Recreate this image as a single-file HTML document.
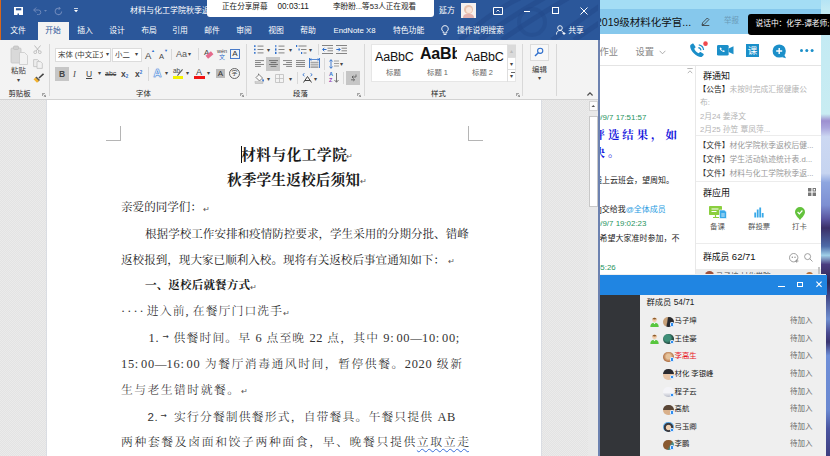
<!DOCTYPE html>
<html lang="zh-CN">
<head>
<meta charset="utf-8">
<title>材料与化工学院秋季返校须知</title>
<style>
*{box-sizing:border-box;margin:0;padding:0}
html,body{width:830px;height:456px;overflow:hidden;background:#fff}
body{position:relative;font-family:"Liberation Sans","Noto Sans CJK SC",sans-serif;font-size:10px;color:#333;-webkit-font-smoothing:antialiased}
.a{position:absolute;white-space:nowrap}
/* ---------- Word window ---------- */
#word{left:0;top:0;width:599px;height:456px;background:#e4e4e4;overflow:hidden}
#tbar{left:0;top:0;width:599px;height:40px;background:#2b579a}
#edge{left:0;top:0;width:1px;height:40px;background:#d9661c}
.tab{top:22px;height:17px;line-height:17px;color:#fff;font-size:7.8px;text-align:center}
#tabsel{left:38px;top:22px;width:30.700px;height:19px;background:#f3f3f3;color:#2b579a}
#ribbon{left:0;top:40px;width:599px;height:60px;background:#f3f3f3;border-bottom:1px solid #d2d2d2}
.glabel{top:88.500px;font-size:7.400px;color:#262626;height:10px;line-height:10px;text-align:center}
.sep{top:44px;width:1px;height:52px;background:#d8d8d8}
.combo{top:48px;height:14px;background:#fff;border:1px solid #dcdcdc;font-size:7.400px;line-height:12px;color:#3a3a3a;padding-left:2px;overflow:hidden}
.ic{font-size:10px;color:#444;line-height:12px}
.rl{font-size:7.400px;line-height:10px;color:#3a3a3a;text-align:center}
.dd{font-size:6px;line-height:7px;color:#444;margin-left:-.5px}
.sty{font-family:"Liberation Sans","DejaVu Sans",sans-serif;color:#111;line-height:16px;height:18px;letter-spacing:-.2px}
.stl{top:67.500px;font-size:7.400px;line-height:10px;color:#666}
/* document */
#docbg{left:0;top:100px;width:599px;height:356px;background:repeating-conic-gradient(#e3e3e3 0 25%,#ebebeb 0 50%) 0 0/2px 2px}
#page{left:46px;top:100px;width:496px;height:356px;background:#fff;border-left:1px solid #dadde3;border-right:1px solid #dadde3}
.doc{font-family:"Liberation Serif","Noto Serif CJK SC",serif;color:#1a1a1a}
.ln{left:121px;height:18px;line-height:18px;font-size:11.57px;text-align:justify;text-align-last:justify;text-justify:inter-character}
.ttl{font-weight:700;font-size:14.7px;height:20px;line-height:20px;text-align-last:justify;text-justify:inter-character}
.pm{color:#555;font-size:7.500px}
.k{font-size:11.8px;font-weight:300;color:#222}
.m{font-family:"Liberation Serif",serif;font-size:12.4px;letter-spacing:.7px;color:#333}
.m i{display:inline-block;width:6.2px;text-align:center;font-style:normal}
.ar{font-size:7.500px;color:#333;line-height:10px;font-family:"DejaVu Sans",sans-serif}
.k u{text-decoration:underline wavy #3a6fd8;text-decoration-thickness:1px;text-underline-offset:2px}
/* share bar */
#share{left:207px;top:0;width:227px;height:17px;background:#fff;border-radius:0 0 3px 3px;font-size:7.6px;color:#222;line-height:14px}
/* ---------- QQ window ---------- */
#desk{left:599px;top:0;width:231px;height:456px;background:#a4ddf5}
#qqhead{left:599px;top:8.500px;width:222px;height:25.500px;background:#86c8ec}
#qqbody{left:599px;top:34px;width:222px;height:241px;background:#fff}
#tip{left:748px;top:14px;width:90px;height:21px;background:#000;border-radius:3px;color:#fff;font-size:7.700px;line-height:20px;padding-left:7.500px}
.ts{font-size:7.900px;line-height:12px;height:12px;color:#1f9460;overflow:hidden;width:90px !important}
.bk{font-family:"Liberation Serif","Noto Serif CJK SC",serif;font-weight:700;font-size:11.400px;letter-spacing:3px;line-height:18px;height:18px;color:#1616dd;overflow:hidden}
.ct{font-size:8px;line-height:12px;height:12px;color:#222;overflow:hidden}
.nt{font-size:7.750px;line-height:11px;color:#b4b4b4}
.al{top:221.500px;font-size:7.400px;line-height:10px;color:#555;text-align:center}
/* ---------- member window ---------- */
#mwin{left:599px;top:274px;width:226.500px;height:182px;background:#efefef}
#mbar{left:599px;top:274.700px;width:228px;height:20.300px;background:#2085e2}
#mdark{left:599px;top:295px;width:41px;height:161px;background:#333539}
.mn{font-size:7.400px;color:#111;height:12px;line-height:12px}
.mw{font-size:7.500px;color:#6a6a6a;height:12px;line-height:12px;left:790px}
.av{width:10.200px;height:10.200px;border-radius:50%;background:#555}
</style>
</head>
<body>
<!-- WORD -->
<div class="a" id="word"></div>
<div class="a" id="tbar"></div>
<div class="a" id="edge"></div>
<svg class="a" style="left:440px;top:0" width="159" height="40" viewBox="0 0 159 40"><g fill="none" stroke="#23498a" stroke-width="5" opacity=".55"><path d="M20 40C40 22 58 8 80 -2"/><path d="M40 40C60 24 82 10 104 -2"/><path d="M62 40C84 24 104 12 128 -2"/><path d="M112 40L160 6"/><path d="M134 40l30-20"/></g><circle cx="92" cy="22" r="13" fill="none" stroke="#23498a" stroke-width="4" opacity=".4"/></svg>

<!-- quick access icons -->
<svg class="a" style="left:13.700px;top:7px" width="9.200" height="8.400" viewBox="0 0 9.200 8.400"><rect x="0" y="0" width="9.200" height="8.400" fill="#fff"/><rect x="1.900" y="1.200" width="5.400" height="2.100" fill="#2b579a"/><rect x="3.500" y="6.500" width="1.500" height="1.900" fill="#2b579a"/></svg>
<svg class="a" style="left:32.500px;top:7px" width="9" height="8" viewBox="0 0 9 8"><path d="M.7 3h4.800a2.300 2.300 0 0 1 0 4.600H4M.7 3l2.500-2.500M.7 3l2.500 2.500" fill="none" stroke="#6e89bb" stroke-width="1"/></svg>
<svg class="a" style="left:44px;top:10px" width="3" height="2" viewBox="0 0 3 2"><path d="M0 0h3L1.500 1.800z" fill="#6e89bb"/></svg>
<svg class="a" style="left:54px;top:7px" width="8.500" height="8.500" viewBox="0 0 10 10"><path d="M6.500 1.600A3.800 3.800 0 1 0 9 5.200M5.800 .2l1.400 1.600L5.400 3.200" fill="none" stroke="#6e89bb" stroke-width="1.200"/></svg>
<svg class="a" style="left:73.800px;top:8.400px" width="4.200" height="4.400" viewBox="0 0 4.200 4.400"><path d="M0 0h4.200v.8H0zM0 1.900h4.200L2.100 4.300z" fill="#fff"/></svg>
<div class="a" style="left:130px;top:5px;font-size:8px;line-height:12px;color:#fff;width:78px;overflow:hidden">材料与化工学院秋季返校后须知</div>
<div class="a" style="left:439px;top:5px;font-size:8px;line-height:12px;color:#fff">延方</div>
<div class="a" style="left:461px;top:3px;width:15px;height:15px;background:#f6f1ee;overflow:hidden"><div class="a" style="left:3px;top:1.500px;width:9px;height:9px;border-radius:50%;background:#e9c2ad"></div><div class="a" style="left:4.500px;top:4px;width:6px;height:6px;border-radius:50%;background:#f8e6dc"></div><div class="a" style="left:2px;top:10.500px;width:11px;height:6px;border-radius:4px 4px 0 0;background:#e3b3b0"></div></div>
<svg class="a" style="left:493px;top:7px" width="10" height="8" viewBox="0 0 10 8"><path d="M.5.5h9v7h-9z" fill="none" stroke="#fff"/><path d="M3.5 4.5L5 3l1.5 1.5" fill="none" stroke="#fff" stroke-width=".9"/></svg>
<div class="a" style="left:524px;top:11px;width:6px;height:1px;background:#fff"></div>
<div class="a" style="left:552px;top:7px;width:7px;height:7px;border:1px solid #fff"></div>
<svg class="a" style="left:580px;top:7px" width="8" height="8" viewBox="0 0 8 8"><path d="M.5.5l7 7M7.5.5l-7 7" stroke="#fff" stroke-width="1"/></svg>
<!-- tabs -->
<div class="a" id="tabsel"></div>
<div class="a tab" style="left:2px;width:32px">文件</div>
<div class="a tab" style="left:37px;width:32px;color:#2b579a">开始</div>
<div class="a tab" style="left:69px;width:32px">插入</div>
<div class="a tab" style="left:101px;width:32px">设计</div>
<div class="a tab" style="left:133px;width:32px">布局</div>
<div class="a tab" style="left:164px;width:32px">引用</div>
<div class="a tab" style="left:196px;width:32px">邮件</div>
<div class="a tab" style="left:228px;width:32px">审阅</div>
<div class="a tab" style="left:260px;width:32px">视图</div>
<div class="a tab" style="left:292px;width:32px">帮助</div>
<div class="a tab" style="left:333px;width:43px">EndNote X8</div>
<div class="a tab" style="left:393px;width:30px">特色功能</div>
<svg class="a" style="left:441px;top:25px" width="8" height="11" viewBox="0 0 8 11"><path d="M4 .6a3.2 3.2 0 0 0-1.8 5.9V8h3.6V6.5A3.2 3.2 0 0 0 4 .6zM2.6 9.5h2.8" fill="none" stroke="#fff" stroke-width=".9"/></svg>
<div class="a tab" style="left:457px;width:46px">操作说明搜索</div>
<svg class="a" style="left:556px;top:25px" width="10" height="10" viewBox="0 0 10 10"><circle cx="4" cy="3" r="2.3" fill="none" stroke="#fff" stroke-width=".9"/><path d="M.5 9.5c0-3 1.5-4 3.5-4s3 1 3.300 2.500M6.500 8.500h3M8 7v3" fill="none" stroke="#fff" stroke-width=".9"/></svg>
<div class="a tab" style="left:568px;width:16px">共享</div>
<div class="a" id="ribbon"></div>

<!-- ===== ribbon content ===== -->
<!-- clipboard -->
<svg class="a" style="left:10px;top:45px" width="19" height="21" viewBox="0 0 19 21"><rect x="1" y="3" width="10" height="15" rx="1" fill="#d9d9d9" stroke="#c4c4c4" stroke-width=".8"/><rect x="3.500" y="1" width="5" height="3.500" rx="1" fill="#cfcfcf" stroke="#bdbdbd" stroke-width=".7"/><path d="M9.500 7.500h5l3 3V19.500h-8z" fill="#f2f2f2" stroke="#c9c9c9" stroke-width=".8"/></svg>
<div class="a rl" style="left:11px;top:65.500px;width:15px">粘贴</div>
<div class="a dd" style="left:17px;top:77px">▾</div>
<svg class="a" style="left:33px;top:45px" width="9" height="9" viewBox="0 0 9 9"><path d="M1.500.5l4.500 5.500M7.500.5L3 6" stroke="#b5b5b5" stroke-width=".9" fill="none"/><circle cx="2.200" cy="7.200" r="1.400" fill="none" stroke="#b5b5b5" stroke-width=".8"/><circle cx="6.800" cy="7.200" r="1.400" fill="none" stroke="#b5b5b5" stroke-width=".8"/></svg>
<svg class="a" style="left:33px;top:59px" width="10" height="10" viewBox="0 0 10 10"><path d="M.6.600h4l1.500 1.500v5.500H.6z" fill="#ededed" stroke="#c0c0c0" stroke-width=".8"/><path d="M4 2.600h3.500l1.800 1.800v5H4z" fill="#f2f2f2" stroke="#c0c0c0" stroke-width=".8"/></svg>
<svg class="a" style="left:33px;top:73px" width="11" height="10" viewBox="0 0 11 10"><path d="M10.500.8L6 5" stroke="#444" stroke-width="1.600"/><path d="M3.500 3.500l3.500 3.500-1.500 1.500L2 5z" fill="#555"/><path d="M2.500 4.500l3.500 3.500L4 9.800.5 6.300z" fill="#f2b230"/></svg>
<div class="a glabel" style="left:8px;width:23px">剪贴板</div>
<svg class="a" style="left:42px;top:93px" width="4" height="4" viewBox="0 0 4 4"><path d="M.4 3V.4H3M1.500 1.500L3.700 3.700M3.700 1.800v1.900H1.800" fill="none" stroke="#777" stroke-width=".7"/></svg>
<div class="a sep" style="left:49px"></div>
<!-- font group -->
<div class="a combo" style="left:55px;width:56px">宋体 (中文正文</div>
<div class="a" style="left:103px;top:49px;width:7px;height:12px;background:#fff"></div>
<div class="a dd" style="left:106px;top:51px">▾</div>
<div class="a combo" style="left:112px;width:30px">小二</div>
<div class="a dd" style="left:135.500px;top:51px">▾</div>
<div class="a ic" style="left:145px;top:50px;font-size:9.500px">A</div><div class="a" style="left:151px;top:48px;font-size:4px;color:#2f6fcc;line-height:5px">▲</div>
<div class="a ic" style="left:159px;top:51px;font-size:7.500px">A</div><div class="a" style="left:164px;top:48px;font-size:4px;color:#2f6fcc;line-height:5px">▼</div>
<div class="a" style="left:171px;top:49px;width:1px;height:11px;background:#d8d8d8"></div>
<div class="a ic" style="left:176px;top:48px;font-size:9px;color:#5a5a5a">Aa</div>
<div class="a dd" style="left:188.500px;top:51px">▾</div>
<div class="a" style="left:198px;top:48px;width:1px;height:12px;background:#d8d8d8"></div>
<div class="a ic" style="left:204px;top:47px;font-size:8px">A</div>
<div class="a" style="left:206px;top:53px;width:7px;height:4px;background:#e56b8c;transform:rotate(-40deg)"></div>
<div class="a" style="left:217px;top:47px;font-size:5.500px;line-height:8px;color:#444">wén</div>
<div class="a" style="left:219px;top:54px;font-size:6px;line-height:7px;color:#2f6fcc">文</div>
<div class="a" style="left:230px;top:49px;width:10px;height:10px;border:1px solid #4a7bc8;font-size:8px;line-height:8px;text-align:center;color:#333">A</div>
<!-- row 2 -->
<div class="a" style="left:55px;top:67px;width:14px;height:14px;background:#c6c6c6"></div>
<div class="a ic" style="left:59px;top:68px;font-weight:700;font-size:8.500px">B</div>
<div class="a ic" style="left:73px;top:68px;font-style:italic;font-size:8.500px;font-family:'Liberation Serif',serif">I</div>
<div class="a ic" style="left:86px;top:68px;font-size:8.500px;text-decoration:underline">U</div>
<div class="a dd" style="left:98px;top:70px">▾</div>
<div class="a ic" style="left:105px;top:68px;font-size:7px;text-decoration:line-through">abc</div>
<div class="a ic" style="left:121px;top:68px;font-size:8.500px;font-weight:700">x<span style="font-size:4.500px;color:#2f6fcc;position:relative;top:1px">2</span></div>
<div class="a ic" style="left:135px;top:68px;font-size:8.500px;font-weight:700">x<span style="font-size:4.500px;color:#2f6fcc;position:relative;top:-3.500px">2</span></div>
<div class="a" style="left:148px;top:67px;width:1px;height:14px;background:#d8d8d8"></div>
<div class="a" style="left:153.500px;top:67px;font-size:11px;line-height:13px;font-weight:700;color:#fff;-webkit-text-stroke:.55px #3f82d6;text-shadow:0 0 1.500px #8fbdf0">A</div>
<div class="a dd" style="left:165px;top:70px">▾</div>
<div class="a ic" style="left:173px;top:65px;font-size:6.500px">ab</div>
<div class="a" style="left:176px;top:72px;width:8px;height:1px;background:#555;transform:rotate(-50deg)"></div>
<div class="a" style="left:173px;top:76px;width:10px;height:3px;background:#f2f200"></div>
<div class="a dd" style="left:186px;top:70px">▾</div>
<div class="a ic" style="left:196px;top:66px;font-size:9px">A</div>
<div class="a" style="left:194px;top:76px;width:11px;height:3px;background:#f01414"></div>
<div class="a dd" style="left:207px;top:70px">▾</div>
<div class="a" style="left:216px;top:69px;width:9px;height:9px;background:#b9b9b9;font-size:8px;line-height:9px;text-align:center;color:#333">A</div>
<div class="a" style="left:229px;top:68px;width:11px;height:11px;border:.8px solid #666;border-radius:50%;font-size:6px;line-height:9.500px;text-align:center;color:#444">字</div>
<div class="a glabel" style="left:136px;width:15px">字体</div>
<svg class="a" style="left:240px;top:93px" width="4" height="4" viewBox="0 0 4 4"><path d="M.4 3V.4H3M1.500 1.500L3.700 3.700M3.700 1.800v1.900H1.800" fill="none" stroke="#777" stroke-width=".7"/></svg>
<div class="a sep" style="left:246px"></div>
<!-- paragraph group -->
<svg class="a" style="left:254px;top:45px" width="10" height="9" viewBox="0 0 10 9"><g fill="#2f6fcc"><rect x="0" y=".3" width="1.600" height="1.600"/><rect x="0" y="3.700" width="1.600" height="1.600"/><rect x="0" y="7.100" width="1.600" height="1.600"/></g><path d="M3.500 1.100h6M3.500 4.500h6M3.500 7.900h6" stroke="#777" stroke-width=".9"/></svg>
<div class="a dd" style="left:267px;top:47px">▾</div>
<svg class="a" style="left:275px;top:45px" width="10" height="9" viewBox="0 0 10 9"><g fill="#2f6fcc"><rect x=".3" y="0" width="1" height="2.200"/><rect x="0" y="3.400" width="1.500" height="2.200"/><rect x="0" y="6.800" width="1.500" height="2.200"/></g><path d="M3.500 1.100h6M3.500 4.500h6M3.500 7.900h6" stroke="#777" stroke-width=".9"/></svg>
<div class="a dd" style="left:289px;top:47px">▾</div>
<svg class="a" style="left:296px;top:45px" width="11" height="9" viewBox="0 0 11 9"><g fill="#2f6fcc"><rect x="0" y="0" width="1.200" height="2"/><rect x="2.500" y="3.500" width="1.200" height="2"/><rect x="5" y="7" width="1.200" height="2"/></g><path d="M2.500 1h8M5 4.500h5.500M7.500 8h3" stroke="#777" stroke-width=".9"/></svg>
<div class="a dd" style="left:309px;top:47px">▾</div>
<div class="a" style="left:318px;top:44px;width:1px;height:11px;background:#d8d8d8"></div>
<svg class="a" style="left:322px;top:45px" width="11" height="9" viewBox="0 0 11 9"><path d="M0 .5h11M5.500 3.200h5.500M5.500 5.800h5.500M0 8.500h11" stroke="#777" stroke-width=".9"/><path d="M4.500 4.500H.8M2.300 2.800L.6 4.500l1.700 1.700" stroke="#2f6fcc" stroke-width="1" fill="none"/></svg>
<svg class="a" style="left:336px;top:45px" width="11" height="9" viewBox="0 0 11 9"><path d="M0 .5h11M5.500 3.200h5.500M5.500 5.800h5.500M0 8.500h11" stroke="#777" stroke-width=".9"/><path d="M.300 4.500H4M2.500 2.800l1.700 1.700-1.700 1.700" stroke="#2f6fcc" stroke-width="1" fill="none"/></svg>
<svg class="a" style="left:254.5px;top:60px" width="9" height="7" viewBox="0 0 9 7"><path d="M0.00 0.60h9.00" stroke="#777" stroke-width="0.9"/><path d="M0.00 2.53h5.85" stroke="#777" stroke-width="0.9"/><path d="M0.00 4.47h9.00" stroke="#777" stroke-width="0.9"/><path d="M0.00 6.40h5.85" stroke="#777" stroke-width="0.9"/></svg>
<div class="a" style="left:266px;top:57px;width:14px;height:14px;background:#c6c6c6"></div>
<svg class="a" style="left:268.5px;top:60px" width="9" height="7" viewBox="0 0 9 7"><path d="M0.00 0.60h9.00" stroke="#666" stroke-width="0.9"/><path d="M1.57 2.53h5.85" stroke="#666" stroke-width="0.9"/><path d="M0.00 4.47h9.00" stroke="#666" stroke-width="0.9"/><path d="M1.57 6.40h5.85" stroke="#666" stroke-width="0.9"/></svg>
<svg class="a" style="left:282.5px;top:60px" width="9" height="7" viewBox="0 0 9 7"><path d="M0.00 0.60h9.00" stroke="#777" stroke-width="0.9"/><path d="M3.15 2.53h5.85" stroke="#777" stroke-width="0.9"/><path d="M0.00 4.47h9.00" stroke="#777" stroke-width="0.9"/><path d="M3.15 6.40h5.85" stroke="#777" stroke-width="0.9"/></svg>
<svg class="a" style="left:296px;top:60px" width="9" height="7" viewBox="0 0 9 7"><path d="M0.00 0.60h9.00" stroke="#777" stroke-width="0.9"/><path d="M0.00 2.53h9.00" stroke="#777" stroke-width="0.9"/><path d="M0.00 4.47h9.00" stroke="#777" stroke-width="0.9"/><path d="M0.00 6.40h9.00" stroke="#777" stroke-width="0.9"/></svg>
<svg class="a" style="left:308.500px;top:58px" width="11" height="10" viewBox="0 0 11 10"><path d="M.5 0v10M10.500 0v10" stroke="#2f6fcc" stroke-width=".9"/><path d="M1 1.500h9M2.500.3L1 1.500l1.500 1.200M8.500.3L10 1.500 8.500 2.700" stroke="#2f6fcc" stroke-width=".8" fill="none"/><path d="M1.500 4.300h8M1.500 6.200h8M1.500 8.100h8M1.500 9.700h8" stroke="#888" stroke-width=".9"/></svg>
<div class="a" style="left:324px;top:58px;width:1px;height:12px;background:#d8d8d8"></div>
<svg class="a" style="left:328.500px;top:58.500px" width="10" height="10" viewBox="0 0 10 10"><path d="M2 .8v8.400M.4 2.500L2 .7l1.600 1.800M.4 7.500L2 9.300l1.600-1.800" stroke="#2f6fcc" stroke-width=".9" fill="none"/><path d="M5 2h5M5 4.500h5M5 7h5" stroke="#888" stroke-width=".8"/></svg>
<div class="a dd" style="left:340.500px;top:61px">▾</div>
<svg class="a" style="left:254px;top:73px" width="11" height="11" viewBox="0 0 11 11"><path d="M2 4.500L5 1.500l3.500 3.500-3 3z" fill="#fafafa" stroke="#666" stroke-width=".8"/><path d="M4.500 2V.6" stroke="#666" stroke-width=".8"/><path d="M8.800 5.500c.8 1 1.200 1.700 1.200 2.200a.9.900 0 0 1-1.800 0c0-.5.300-1.200.6-2.200z" fill="#2f6fcc"/><rect x="1" y="8.700" width="8" height="2" fill="#d0d0d0" stroke="#aaa" stroke-width=".4"/></svg>
<div class="a dd" style="left:267px;top:75.500px">▾</div>
<svg class="a" style="left:275px;top:74px" width="9" height="9" viewBox="0 0 9 9"><path d="M.5.500h8v8h-8zM4.500.5v8M.5 4.500h8" fill="none" stroke="#bdbdbd" stroke-width=".8"/></svg>
<div class="a dd" style="left:289px;top:75.500px">▾</div>
<div class="a" style="left:297px;top:72px;width:1px;height:12px;background:#d8d8d8"></div>
<svg class="a" style="left:302px;top:73px" width="11" height="10" viewBox="0 0 11 10"><path d="M1.500 9.500L5.500 3.500l4 6M2.800 7.500h5.400" fill="none" stroke="#444" stroke-width="1"/><path d="M2.500.3L.8 1.700l1.700 1.400M8.500.3l1.700 1.400-1.700 1.400" fill="none" stroke="#2f6fcc" stroke-width=".9"/></svg>
<div class="a dd" style="left:314.500px;top:75.500px">▾</div>
<div class="a" style="left:324px;top:72px;width:1px;height:12px;background:#d8d8d8"></div>
<div class="a" style="left:329px;top:72px;font-size:5.500px;line-height:5.500px;color:#2f6fcc;font-weight:700">A</div><div class="a" style="left:329px;top:77.500px;font-size:5.500px;line-height:5.500px;color:#9a3fb5;font-weight:700">Z</div>
<svg class="a" style="left:334px;top:73px" width="5" height="10" viewBox="0 0 5 10"><path d="M2.500 0v9M.5 7l2 2.300 2-2.300" fill="none" stroke="#666" stroke-width=".9"/></svg>
<div class="a" style="left:343px;top:72px;width:1px;height:12px;background:#d8d8d8"></div>
<div class="a" style="left:346px;top:71px;width:14px;height:14px;background:#c6c6c6"></div>
<svg class="a" style="left:349.500px;top:74px" width="7" height="8" viewBox="0 0 7 8"><path d="M6 .500v2.500H2M3.300 1.700L2 3l1.300 1.300" fill="none" stroke="#555" stroke-width=".8"/><path d="M1 5.800h3.500M3.300 4.600L4.600 5.800 3.300 7" fill="none" stroke="#555" stroke-width=".8"/></svg>
<div class="a glabel" style="left:293px;width:15px">段落</div>
<svg class="a" style="left:357px;top:93px" width="4" height="4" viewBox="0 0 4 4"><path d="M.4 3V.4H3M1.500 1.500L3.700 3.700M3.700 1.800v1.900H1.800" fill="none" stroke="#777" stroke-width=".7"/></svg>
<div class="a sep" style="left:364px"></div>
<!-- styles -->
<div class="a" style="left:371px;top:44px;width:145px;height:38px;background:#fff;border:1px solid #e6e6e6"></div>
<div class="a sty" style="left:375px;top:49px;font-size:12.500px">AaBbC</div>
<div class="a sty" style="left:420px;top:46px;font-size:16px;font-weight:700;width:37px;overflow:hidden">AaBbC</div>
<div class="a sty" style="left:465px;top:49px;font-size:12.500px">AaBbC</div>
<div class="a stl" style="left:386px">标题</div>
<div class="a stl" style="left:427px">标题 1</div>
<div class="a stl" style="left:472px">标题 2</div>
<div class="a" style="left:507px;top:45px;width:9px;height:12px;background:#dadada"></div>
<div class="a" style="left:507px;top:44px;width:1px;height:38px;background:#dedede"></div>
<div class="a" style="left:507px;top:57px;width:9px;height:1px;background:#dedede"></div>
<div class="a" style="left:507px;top:69px;width:9px;height:1px;background:#dedede"></div>
<div class="a dd" style="left:510px;top:48px;color:#bbb">▴</div>
<div class="a dd" style="left:510px;top:60.500px">▾</div>
<div class="a" style="left:510.500px;top:72px;width:4px;height:1px;background:#666"></div>
<div class="a dd" style="left:510px;top:73px">▾</div>
<div class="a glabel" style="left:431px;width:15px">样式</div>
<svg class="a" style="left:516px;top:93px" width="4" height="4" viewBox="0 0 4 4"><path d="M.4 3V.4H3M1.500 1.500L3.700 3.700M3.700 1.800v1.900H1.800" fill="none" stroke="#777" stroke-width=".7"/></svg>
<div class="a sep" style="left:522px"></div>
<!-- editing -->
<div class="a" style="left:529.500px;top:43.500px;width:19px;height:17px;background:#f8f8f8;border:1px solid #dcdcdc"></div>
<svg class="a" style="left:534px;top:47px" width="10" height="10" viewBox="0 0 10 10"><circle cx="6.200" cy="3.800" r="2.600" fill="none" stroke="#2f6fcc" stroke-width="1.100"/><path d="M4.300 5.700L1 9" stroke="#2f6fcc" stroke-width="1.400"/></svg>
<div class="a rl" style="left:532px;top:64.500px;width:15px">编辑</div>
<div class="a dd" style="left:538.500px;top:75px">▾</div>
<div class="a sep" style="left:556px"></div>
<svg class="a" style="left:586.500px;top:92.200px" width="6" height="4" viewBox="0 0 6 4"><path d="M.4 3.500L3 .8l2.600 2.700" fill="none" stroke="#505050" stroke-width="1.200"/></svg>

<div class="a" id="docbg"></div>
<div class="a" id="page"></div>
<div class="a" style="left:587.500px;top:100px;width:10px;height:356px;background:#e9e9e9"></div>
<div class="a" style="left:588.500px;top:101px;width:9px;height:9.500px;background:#fdfdfd;border:1px solid #d4d4d4"></div>
<svg class="a" style="left:591px;top:104.500px" width="4.600" height="2.600" viewBox="0 0 4.600 2.600"><path d="M0 2.600L2.300 0l2.300 2.600z" fill="#555"/></svg>
<div class="a" style="left:589px;top:116px;width:8.500px;height:91px;background:#fff;border:1px solid #c8c8c8"></div>
<div class="a" style="left:598px;top:0;width:1.800px;height:456px;background:#6d82b0;z-index:5"></div>
<div class="a" style="left:597.500px;top:0;width:2.300px;height:40px;background:#2b579a;z-index:6"></div>


<!-- document text -->
<div class="a" style="left:106px;top:140px;width:15px;height:1px;background:#b5b5b5"></div>
<div class="a" style="left:120px;top:126px;width:1px;height:15px;background:#b5b5b5"></div>
<div class="a" style="left:468px;top:140px;width:15px;height:1px;background:#b5b5b5"></div>
<div class="a" style="left:468px;top:126px;width:1px;height:15px;background:#b5b5b5"></div>
<div class="a" style="left:241px;top:146px;width:1px;height:17px;background:#111"></div>
<div class="a doc ttl" style="left:241px;top:145px;width:106px">材料与化工学院</div>
<div class="a doc pm" style="left:346px;top:152px">↵</div>
<div class="a doc ttl" style="left:227px;top:170px;width:133px">秋季学生返校后须知</div>
<div class="a doc pm" style="left:360px;top:177px">↵</div>
<div class="a doc ln" style="top:199px;width:80px">亲爱的同学们：</div>
<div class="a doc pm" style="left:203px;top:205px">↵</div>
<div class="a doc ln" style="left:145px;top:225.500px;width:323px">根据学校工作安排和疫情防控要求，学生采用的分期分批、错峰</div>
<div class="a doc ln" style="top:251.500px;width:324px">返校报到，现大家已顺利入校。现将有关返校后事宜通知如下：</div>
<div class="a doc pm" style="left:447.500px;top:257px">↵</div>
<div class="a doc ln" style="left:145px;top:277.400px;width:105px;font-weight:700">一、返校后就餐方式</div>
<div class="a doc pm" style="left:250px;top:283px">↵</div>
<div class="a doc ln k" style="top:302.300px;width:161px"><span class="m"><i>·</i><i>·</i><i>·</i><i>·</i></span>进入前<span class="m"><i>,</i></span>在餐厅门口洗手</div>
<div class="a doc pm" style="left:283px;top:309px">↵</div>
<div class="a doc ln k" style="left:148.500px;top:328.500px;width:9px"><span class="m">1<i>.</i></span></div>
<div class="a doc ar" style="left:162.500px;top:331.500px">→</div>
<div class="a doc ln k" style="left:173.500px;top:328.500px;width:288.500px">供餐时间。早 <span class="m">6</span> 点至晚 <span class="m">22</span> 点，其中 <span class="m">9<i>:</i>00</span>—<span class="m">10<i>:</i>00<i>;</i></span></div>
<div class="a doc ln k" style="top:354.700px;width:341px"><span class="m">15<i>:</i>00</span>—<span class="m">16<i>:</i>00</span> 为餐厅消毒通风时间，暂停供餐。<span class="m">2020</span> 级新</div>
<div class="a doc ln k" style="top:381px;width:118px">生与老生错时就餐。</div>
<div class="a doc pm" style="left:241px;top:387px">↵</div>
<div class="a doc ln k" style="left:147.500px;top:407.600px;width:9px;font-family:'Liberation Sans',sans-serif"><span class="m" style="font-family:'Liberation Sans',sans-serif;font-size:11.500px">2<i>.</i></span></div>
<div class="a doc ar" style="left:160.500px;top:410.600px">→</div>
<div class="a doc ln k" style="left:174px;top:407.600px;width:282px">实行分餐制供餐形式，自带餐具。午餐只提供 <span class="m">AB</span></div>
<div class="a doc ln k" style="top:433.400px;width:348px">两种套餐及卤面和饺子两种面食，早、晚餐只提供<u>立取立走</u></div>

<!-- QQ -->
<div class="a" id="desk"></div>
<div class="a" style="left:821px;top:0;width:9px;height:456px;background:linear-gradient(180deg,#b5e4f5 0,#c2eaf4 2%,#c8ecf2 25%,#9d8fd0 26.500%,#a9a4dc 28%,#ccd8f2 30%,#c6d4f0 38%,#8ea6e0 40%,#7d8fd2 45%,#5a55a0 48%,#3b2f68 50%,#4d6aa8 54%,#9fd0e8 56%,#4a3c80 58%,#2e2650 62%,#3a3a78 64%,#6f8fd0 70%,#4a4a90 73%,#3a3570 75%,#6f8fd8 78%,#6a88d0 90%,#4a55a0 94%,#3f3f80 100%)"></div>
<div class="a" id="qqhead"></div>
<div class="a" id="qqbody"></div>
<!-- qq header -->
<div class="a" style="left:599px;top:14px;font-size:10.500px;line-height:16px;color:#111;width:120px;overflow:hidden"><span style="margin-left:-3px">2019级材料化学官...</span></div>
<svg class="a" style="left:701px;top:17px" width="9" height="9" viewBox="0 0 9 9"><path d="M1 8l.6-2.200L6.300 1l1.600 1.600L3.200 7.400zM.8 8.500h7.500" fill="none" stroke="#333" stroke-width=".8"/></svg>
<div class="a" style="left:724px;top:16px;font-size:7.500px;line-height:10px;color:#6a9ab8">举报</div>
<!-- toolbar -->
<div class="a" style="left:599.500px;top:46px;font-size:9.300px;line-height:12px;color:#8a8a8a">作业</div>
<div class="a" style="left:635.500px;top:46px;font-size:9.300px;line-height:12px;color:#8a8a8a">设置</div>
<svg class="a" style="left:659px;top:50px" width="7" height="5" viewBox="0 0 7 5"><path d="M.6.800L3.500 3.800 6.400.8" fill="none" stroke="#999" stroke-width=".8"/></svg>
<svg class="a" style="left:688px;top:40.800px" width="20.400" height="20.400" viewBox="0 0 17 17"><path d="M2.200 3.200c-.9 1-.2 4 2.400 6.800s5.800 4 7 3.200l1.300-1.300c.4-.4.300-.9-.1-1.200l-2-1.300c-.4-.3-.9-.200-1.200.100l-.7.800c-1.600-.8-3-2.300-3.700-3.900l.8-.700c.3-.3.400-.8.100-1.200L4.700 2.400c-.3-.4-.8-.4-1.200-.1z" fill="#1b8fc9"/><path d="M8.600 5.500a2.500 2.500 0 0 1 2.200 2.300M9 3.300a4.800 4.800 0 0 1 4 4.200" fill="none" stroke="#1b8fc9" stroke-width="1"/><circle cx="14.600" cy="2.200" r="1.900" fill="#f0484d"/></svg>
<svg class="a" style="left:717px;top:45px" width="16.500" height="10.500" viewBox="0 0 17 12" preserveAspectRatio="none"><rect x="0" y="0" width="12" height="12" rx="1.500" fill="#1b8fc9"/><path d="M12 4l5-2.500v9L12 8z" fill="#1b8fc9"/><path d="M3 3.300c-.4.500-.100 1.800 1.100 3.100s2.600 1.900 3.200 1.500l.6-.6-.1-.6-1-.6-.5.100-.3.400c-.7-.4-1.400-1.100-1.700-1.800l.4-.3.100-.6-.7-.9-.5-.100z" fill="#fff"/></svg>
<div class="a" style="left:746px;top:44px;width:13px;height:13px;background:#1b8fc9;color:#fff;font-size:9.500px;line-height:13px;text-align:center">课</div>
<svg class="a" style="left:772px;top:44px" width="15" height="15" viewBox="0 0 15 15"><circle cx="7.200" cy="7" r="6.600" fill="#1b8fc9"/><path d="M12.400 11l1.600 3.300-4.500-1.300z" fill="#1b8fc9"/><path d="M7.200 4v6M4.200 7h6" stroke="#fff" stroke-width="1.400"/></svg>
<div class="a" style="left:800px;top:48.500px;width:3px;height:3px;border-radius:50%;background:#1b8fc9;box-shadow:5.300px 0 0 #1b8fc9,10.600px 0 0 #1b8fc9"></div>
<div class="a" style="left:599px;top:65px;width:222px;height:1px;background:#e4e4e4"></div>
<div class="a" style="left:695px;top:66px;width:1px;height:208px;background:#e8e8e8"></div>
<svg class="a" style="left:687px;top:67.500px" width="6" height="6" viewBox="0 0 6 6"><path d="M.3.500h5.400M.8 5.200L3 2.800l2.200 2.400" fill="none" stroke="#999" stroke-width=".7"/></svg>
<!-- chat column -->
<div class="a ts" style="left:599px;top:112px"><span style="margin-left:-7.500px">19/9/7 17:51:57</span></div>
<div class="a bk" style="left:599px;top:125.500px;width:90px"><span style="margin-left:-5.500px">评选结果，如</span></div>
<div class="a bk" style="left:599px;top:143.500px;width:90px"><span style="margin-left:-5.500px">决。</span></div>
<div class="a ct" style="left:599px;top:175px;width:90px"><span style="margin-left:-5px">线上云班会，望周知。</span></div>
<div class="a ct" style="left:599px;top:204px;width:90px"><span style="margin-left:.5px">]交给我<span style="color:#2a9de2">@全体成员</span></span></div>
<div class="a ts" style="left:599px;top:218px"><span style="margin-left:-7.500px">19/9/7 19:02:23</span></div>
<div class="a ct" style="left:599px;top:233px;width:90px"><span style="margin-left:.5px">希望大家准时参加，不</span></div>
<div class="a ts" style="left:599px;top:262px"><span style="margin-left:-14px">19:55:26</span></div>
<!-- right column -->
<div class="a" style="left:703px;top:70px;font-size:9px;line-height:12px;color:#111">群通知</div>
<div class="a nt" style="left:698.500px;top:84px"><span style="color:#222">【公告】</span>未按时完成汇报健康公</div>
<div class="a nt" style="left:700px;top:97px">布:</div>
<div class="a nt" style="left:700px;top:110.500px">2月24 姜泽文</div>
<div class="a nt" style="left:700px;top:123.500px">2月25 孙笠 覃凤萍...</div>
<div class="a" style="left:696px;top:135px;width:125px;height:1px;background:#ececec"></div>
<div class="a nt" style="left:698.500px;top:140px;color:#999"><span style="color:#333">【文件】</span>材化学院秋季返校后健...</div>
<div class="a nt" style="left:698.500px;top:154px;color:#999"><span style="color:#333">【文件】</span>学生活动轨迹统计表.d...</div>
<div class="a nt" style="left:698.500px;top:167.500px;color:#999"><span style="color:#333">【文件】</span>材料与化工学院秋季返...</div>
<div class="a" style="left:696px;top:181px;width:125px;height:1px;background:#ececec"></div>
<div class="a" style="left:703px;top:187px;font-size:9px;line-height:12px;color:#111">群应用</div>
<svg class="a" style="left:808px;top:188px" width="8" height="8" viewBox="0 0 8 8"><path d="M0 0h3.400v3.400H0zM4.600 0H8v3.400H4.600zM0 4.600h3.400V8H0zM4.600 4.600H8V8H4.600z" fill="#777"/><path d="M5.600 1h1.400v1.400H5.600z" fill="#fff"/></svg>
<svg class="a" style="left:709px;top:206px" width="18" height="13" viewBox="0 0 18 13"><rect x="0" y="0" width="13" height="9" rx=".8" fill="#8bcf3f"/><path d="M2.500 3h7M2.500 5.500h5" stroke="#fff" stroke-width="1"/><path d="M4 11.500h6M6.500 9v2.500" stroke="#8bcf3f" stroke-width="1.200"/><path d="M10.500 4h5l2 2v6.500h-7z" fill="#39a9e8" stroke="#fff" stroke-width=".6"/><path d="M12.300 8h3.400M12.300 10h3.400" stroke="#fff" stroke-width=".8"/></svg>
<div class="a al" style="left:710px;width:15px">备课</div>
<svg class="a" style="left:754px;top:207px" width="10" height="11" viewBox="0 0 10 11"><path d="M1.200 10.500V5.500M3.700 10.500V2.500M6.200 10.500V0.500M8.700 10.500V6" stroke="#39a9e8" stroke-width="1.800"/></svg>
<div class="a al" style="left:748px;width:22px">群投票</div>
<svg class="a" style="left:795px;top:206.500px" width="10" height="13" viewBox="0 0 10 13"><path d="M5 0a5 5 0 0 1 5 5c0 3-3.500 6-5 8C3.500 11 0 8 0 5a5 5 0 0 1 5-5z" fill="#63c23c"/><path d="M2.600 5l1.800 1.800 3-3.300" fill="none" stroke="#fff" stroke-width="1.200"/></svg>
<div class="a al" style="left:792px;width:15px">打卡</div>
<div class="a" style="left:696px;top:243px;width:125px;height:1px;background:#ececec"></div>
<div class="a" style="left:703px;top:251px;font-size:8.800px;line-height:12px;color:#111">群成员 <span style="font-size:9.500px">62/71</span></div>
<svg class="a" style="left:789px;top:252.500px" width="10" height="10" viewBox="0 0 10 10"><circle cx="4.700" cy="4.700" r="4.200" fill="none" stroke="#888" stroke-width=".8"/><circle cx="3.300" cy="4.200" r=".7" fill="#888"/><circle cx="6" cy="4.200" r=".7" fill="#888"/><path d="M6 8h3.500M7.700 6.300v3.400" stroke="#888" stroke-width=".8"/></svg>
<svg class="a" style="left:804px;top:253px" width="9" height="9" viewBox="0 0 9 9"><circle cx="3.600" cy="3.600" r="3" fill="none" stroke="#888" stroke-width=".8"/><path d="M5.800 5.800L8.500 8.500" stroke="#888" stroke-width=".8"/></svg>
<div class="a" style="left:696px;top:268.500px;width:125px;height:6px;background:#ececec"></div>
<div class="a" style="left:704.500px;top:270.500px;width:9px;height:9px;border-radius:50%;background:#a0523c"></div>
<div class="a" style="left:716px;top:271.500px;font-size:7.500px;line-height:9px;color:#555">马子坤 材化学院</div>
<div class="a" style="left:806px;top:271.500px;width:7px;height:7px;border-radius:50%;background:#b5703a"></div>
<div class="a" style="left:817.500px;top:267px;width:2.500px;height:8px;background:#c4c4c4"></div>

<!-- MEMBERS -->
<div class="a" id="mwin"></div>
<div class="a" id="mbar"></div>
<div class="a" id="mdark"></div>
<div class="a" style="left:778px;top:285.500px;width:6.500px;height:1.500px;background:#fff"></div>
<div class="a" style="left:796.500px;top:281.500px;width:6.500px;height:5.500px;border:1.200px solid #fff;border-top-width:1.800px"></div>
<svg class="a" style="left:815.500px;top:281px" width="6" height="6.500" viewBox="0 0 7 7"><path d="M.5.500l6 6M6.500.5l-6 6" stroke="#fff" stroke-width="1.300"/></svg>
<div class="a" style="left:646.500px;top:295.500px;font-size:8.300px;line-height:12px;color:#222">群成员 54/71</div>
<svg class="a" style="left:650px;top:316.6px" width="9" height="10" viewBox="0 0 9 10"><circle cx="4.500" cy="2.800" r="2.300" fill="#f1c9a5"/><path d="M2.300 2.300a2.300 2.300 0 0 1 4.400 0c-1 .2-3.400.2-4.400 0z" fill="#8a5a2b"/><path d="M.3 10c0-3 1.500-4.300 4.200-4.300S8.700 7 8.700 10z" fill="#58c63e"/><path d="M3.300 5.800l1.200 1.500 1.200-1.500z" fill="#fff"/></svg>
<div class="a av" style="left:663.400px;top:316.6px;background:linear-gradient(100deg,#c9a27a 0 35%,#2a2a2e 45% 100%)"></div><div class="a" style="left:669.500px;top:322.1px;width:4.500px;height:4.500px;border-radius:1.200px;background:#2f8ef0;border:.6px solid #e8f2ff"></div>
<div class="a mn" style="left:674.500px;top:315.1px;color:#222">马子坤</div>
<div class="a mw" style="top:315.1px">待加入</div>
<svg class="a" style="left:650px;top:334.2px" width="9" height="10" viewBox="0 0 9 10"><circle cx="4.500" cy="2.800" r="2.300" fill="#f1c9a5"/><path d="M2.300 2.300a2.300 2.300 0 0 1 4.400 0c-1 .2-3.400.2-4.400 0z" fill="#8a5a2b"/><path d="M.3 10c0-3 1.500-4.300 4.200-4.300S8.700 7 8.700 10z" fill="#58c63e"/><path d="M3.300 5.800l1.200 1.500 1.200-1.500z" fill="#fff"/></svg>
<div class="a av" style="left:663.400px;top:334.2px;background:radial-gradient(circle at 40% 40%,#3f8f78 0 35%,#1e3b35 70%)"></div><div class="a" style="left:669.500px;top:339.7px;width:4.500px;height:4.500px;border-radius:1.200px;background:#2f8ef0;border:.6px solid #e8f2ff"></div>
<div class="a mn" style="left:674.500px;top:332.7px;color:#222">王佳豪</div>
<div class="a mw" style="top:332.7px">待加入</div>
<div class="a av" style="left:663.400px;top:351.8px;background:radial-gradient(circle at 50% 45%,#e6c29a 0 30%,#b5764a 65%,#8a5a3a 100%)"></div><div class="a" style="left:669.500px;top:357.3px;width:4.500px;height:4.500px;border-radius:1.200px;background:#2f8ef0;border:.6px solid #e8f2ff"></div>
<div class="a mn" style="left:674.500px;top:350.3px;color:#e8141e">李高生</div>
<div class="a mw" style="top:350.3px">待加入</div>
<div class="a av" style="left:663.400px;top:369.4px;background:linear-gradient(180deg,#2b2b30 0 42%,#e9c6a8 48% 100%)"></div><div class="a" style="left:669.500px;top:374.9px;width:4.500px;height:4.500px;border-radius:1.200px;background:#2f8ef0;border:.6px solid #e8f2ff"></div>
<div class="a mn" style="left:674.500px;top:367.9px;color:#222">材化 李银峰</div>
<div class="a mw" style="top:367.9px">待加入</div>
<div class="a av" style="left:663.400px;top:387.0px;background:linear-gradient(180deg,#f4f4f8 0 55%,#b9bcc8 100%)"></div><div class="a" style="left:669.500px;top:392.5px;width:4.500px;height:4.500px;border-radius:1.200px;background:#2f8ef0;border:.6px solid #e8f2ff"></div>
<div class="a mn" style="left:674.500px;top:385.5px;color:#222">程子云</div>
<div class="a mw" style="top:385.5px">待加入</div>
<div class="a av" style="left:663.400px;top:404.6px;background:linear-gradient(180deg,#5a4636 0 45%,#d9b08a 55% 100%)"></div><div class="a" style="left:669.500px;top:410.1px;width:4.500px;height:4.500px;border-radius:1.200px;background:#2f8ef0;border:.6px solid #e8f2ff"></div>
<div class="a mn" style="left:674.500px;top:403.1px;color:#222">高航</div>
<div class="a mw" style="top:403.1px">待加入</div>
<div class="a av" style="left:663.400px;top:422.2px;background:radial-gradient(circle at 50% 55%,#f0d0b0 0 28%,#3a3a40 40% 55%,#5aa6e0 65%)"></div><div class="a" style="left:669.500px;top:427.7px;width:4.500px;height:4.500px;border-radius:1.200px;background:#2f8ef0;border:.6px solid #e8f2ff"></div>
<div class="a mn" style="left:674.500px;top:420.7px;color:#222">弓玉卿</div>
<div class="a mw" style="top:420.7px">待加入</div>
<div class="a av" style="left:663.400px;top:439.8px;background:linear-gradient(120deg,#8a5a30 0 55%,#3f8f90 70% 100%)"></div><div class="a" style="left:669.500px;top:445.3px;width:4.500px;height:4.500px;border-radius:1.200px;background:#2f8ef0;border:.6px solid #e8f2ff"></div>
<div class="a mn" style="left:674.500px;top:438.3px;color:#222">李鹏</div>
<div class="a mw" style="top:438.3px">待加入</div>

<div class="a" id="tip">说话中：化学-谭老师;</div>
<div class="a" id="share"><span class="a" style="left:15px;top:0">正在分享屏幕</span><span class="a" style="left:70.500px;top:0;font-size:8.200px">00:03:11</span><span class="a" style="left:126px;top:0">李盼盼...等53人正在观看</span></div>
</body>
</html>
